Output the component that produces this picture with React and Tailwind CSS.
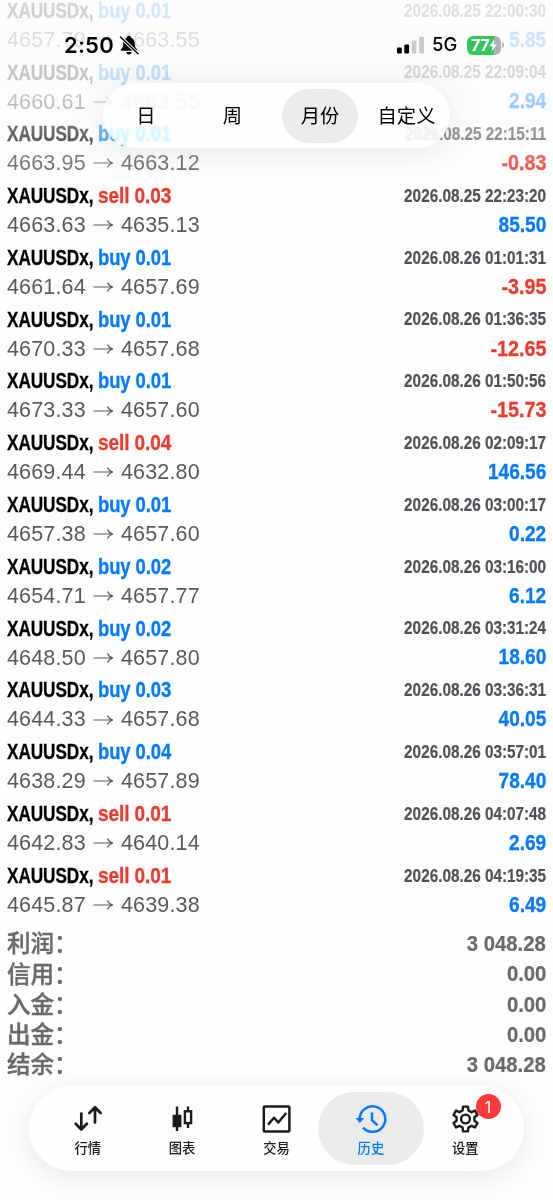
import React from "react";

const DEALS = [
  ["buy 0.01", "4657.79", "4663.55", "2026.08.25 22:00:30", "5.85"],
  ["buy 0.01", "4660.61", "4663.55", "2026.08.25 22:09:04", "2.94"],
  ["buy 0.01", "4663.95", "4663.12", "2026.08.25 22:15:11", "-0.83"],
  ["sell 0.03", "4663.63", "4635.13", "2026.08.25 22:23:20", "85.50"],
  ["buy 0.01", "4661.64", "4657.69", "2026.08.26 01:01:31", "-3.95"],
  ["buy 0.01", "4670.33", "4657.68", "2026.08.26 01:36:35", "-12.65"],
  ["buy 0.01", "4673.33", "4657.60", "2026.08.26 01:50:56", "-15.73"],
  ["sell 0.04", "4669.44", "4632.80", "2026.08.26 02:09:17", "146.56"],
  ["buy 0.01", "4657.38", "4657.60", "2026.08.26 03:00:17", "0.22"],
  ["buy 0.02", "4654.71", "4657.77", "2026.08.26 03:16:00", "6.12"],
  ["buy 0.02", "4648.50", "4657.80", "2026.08.26 03:31:24", "18.60"],
  ["buy 0.03", "4644.33", "4657.68", "2026.08.26 03:36:31", "40.05"],
  ["buy 0.04", "4638.29", "4657.89", "2026.08.26 03:57:01", "78.40"],
  ["sell 0.01", "4642.83", "4640.14", "2026.08.26 04:07:48", "2.69"],
  ["sell 0.01", "4645.87", "4639.38", "2026.08.26 04:19:35", "6.49"],
];

const SUMMARY = [
  ["利润：", "3 048.28"],
  ["信用：", "0.00"],
  ["入金：", "0.00"],
  ["出金：", "0.00"],
  ["结余：", "3 048.28"],
];

function Deal({ deal }) {
  const [side, open, close, time, profit] = deal;
  const isBuy = side.startsWith("buy");
  return (
    <div className="flex h-[61.79px] flex-col">
      <div className="flex h-[29px] items-center justify-between">
        <span className="flex text-[21.5px] font-bold text-black [-webkit-text-stroke:0.3px_currentColor]">
          <span className="w-[91px] origin-left scale-x-[0.8] tracking-[-0.1px]">XAUUSDx,</span>
          <span
            className={
              "origin-left tracking-[-0.1px] " +
              (isBuy ? "scale-x-[0.858] text-[#007aff]" : "scale-x-[0.885] text-[#eb3b2e]")
            }
          >
            {side}
          </span>
        </span>
        <span className="origin-right scale-x-[0.86] text-[17.8px] font-bold text-[#505056] [-webkit-text-stroke:0.2px_currentColor]">{time}</span>
      </div>
      <div className="flex h-[29px] items-center justify-between">
        <span className="flex items-center text-[21.5px] text-[#58595e]">
          <span className="w-[79px] tracking-[0.15px]">{open}</span>
          <svg className="mx-[7px] h-[12px] w-[21px]" viewBox="0 0 21 12" fill="none" stroke="currentColor" strokeWidth="1.1">
            <path d="M0.5 6H20M14.5 1.5C15.5 4 17.3 5.4 20 6C17.3 6.6 15.5 8 14.5 10.5" />
          </svg>
          <span className="tracking-[0.15px]">{close}</span>
        </span>
        <span
          className={
            "origin-right text-[21.7px] font-bold [-webkit-text-stroke:0.3px_currentColor] " +
            (profit.startsWith("-") ? "scale-x-[0.91] text-[#eb3b2e]" : "scale-x-[0.88] text-[#007aff]")
          }
        >
          {profit}
        </span>
      </div>
    </div>
  );
}

function StatusBar() {
  return (
    <div className="absolute inset-x-0 top-[30px] flex h-[30px] items-center justify-between pr-[49px] pl-[64px] font-['Inter',sans-serif] text-black">
      <div className="flex items-center gap-[4px]">
        <span className="w-[51px] text-[22px] font-semibold tracking-[0.2px]">2:50</span>
        <svg className="h-[20px] w-[20px]" viewBox="0 0 20 20">
          <path d="M10 0.8C11.3 0.8 12.1 1.6 12.2 2.7C14.6 3.6 15.8 5.8 15.8 8.5C15.8 11.8 16.5 13 18 14.3C18.5 14.8 18.3 15.8 17.4 15.8H2.6C1.7 15.8 1.5 14.8 2 14.3C3.5 13 4.2 11.8 4.2 8.5C4.2 5.8 5.4 3.6 7.8 2.7C7.9 1.6 8.7 0.8 10 0.8Z" />
          <path d="M7.2 17H12.8C12.5 18.7 11.5 19.5 10 19.5C8.5 19.5 7.5 18.7 7.2 17Z" />
          <path d="M1.5 2L19 18.8" stroke="#fcfcfc" strokeWidth="3.4" />
          <path d="M1.5 2L19 18.8" stroke="#000" strokeWidth="1.4" strokeLinecap="round" />
        </svg>
      </div>
      <div className="flex items-center">
        <svg className="h-[18px] w-[28px]" viewBox="0 0 28 18">
          <rect x="0" y="11.5" width="4.8" height="6" rx="1.3" />
          <rect x="7.3" y="8.5" width="4.8" height="9" rx="1.3" />
          <rect x="14.7" y="4.5" width="4.8" height="13" rx="1.3" fill="#c9c9c9" />
          <rect x="22.1" y="0.8" width="4.8" height="16.7" rx="1.3" fill="#c9c9c9" />
        </svg>
        <span className="ml-[7px] w-[35px] text-[18.5px] font-medium">5G</span>
        <div className="flex h-[19px] w-[34px] items-center justify-center rounded-[6px] bg-linear-to-r from-[#34c759] from-78% to-[#b2b2b2] to-78% text-white">
          <span className="text-[16px] leading-none font-bold tracking-[-0.4px]">77</span>
          <svg className="h-[13px] w-[8px]" viewBox="0 0 8 13" fill="currentColor">
            <path d="M5.4 0.3L0.3 7.2H3.5L2.6 12.7L7.8 5.5H4.5Z" />
          </svg>
        </div>
        <svg className="ml-px h-[6px] w-[2px]" viewBox="0 0 2 6" fill="#b2b2b2">
          <path d="M0 0C2.7 1 2.7 5 0 6Z" />
        </svg>
      </div>
    </div>
  );
}

function PeriodPicker() {
  return (
    <div className="absolute top-[83px] left-[103px] flex h-[65px] w-[347px] items-center rounded-full bg-[#fefefe]/82 font-['Noto_Sans_CJK_SC',sans-serif] text-[19.3px] text-black backdrop-blur-[1.2px] backdrop-hue-rotate-[-22deg] backdrop-saturate-200">
      <span className="w-[86px] text-center">日</span>
      <span className="w-[87px] text-center">周</span>
      <span className="mx-[6px] flex h-[54px] w-[76px] items-center justify-center rounded-full bg-[#ebebeb]">月份</span>
      <span className="w-[85px] text-center">自定义</span>
    </div>
  );
}

const ICONS = {
  quotes: (
    <g strokeWidth="2.7" strokeLinecap="round" strokeLinejoin="round">
      <path d="M9.3 8.5V24.3M3.7 18.8L9.3 24.5L14.9 18.8M23 17.5V2.5M17.4 8L23 2.2L28.6 8" />
    </g>
  ),
  chart: (
    <g strokeWidth="2.4">
      <path d="M11 1.5V26M22 1.5V5.5M22 18.5V23" />
      <rect x="7.8" y="11" width="6.4" height="10" fill="currentColor" />
      <rect x="18.9" y="6.3" width="6.2" height="11.8" />
    </g>
  ),
  trade: (
    <g strokeWidth="2.5" strokeLinejoin="round">
      <rect x="3.8" y="1.4" width="25.6" height="25.2" rx="1" />
      <path d="M8 19.6L14 12.7L18.3 17.5L26.2 8" />
    </g>
  ),
  history: (
    <g strokeWidth="2.5">
      <path d="M4.7 15A12.8 12.8 0 1 1 8 22.7" />
      <path d="M0.5 13H9.3L4.9 18Z" fill="currentColor" stroke="none" />
      <path d="M17 7.5V15.2L22.5 20.3" />
    </g>
  ),
  settings: (
    <g strokeWidth="2.4" strokeLinejoin="round">
      <path d="M14 1.6L19 1.6L19.4 5.4L22.5 7.2L26 5.6L28.5 10L25.4 12.2V15.8L28.5 18L26 22.4L22.5 20.8L19.4 22.6L19 26.4H14L13.6 22.6L10.5 20.8L7 22.4L4.5 18L7.6 15.8V12.2L4.5 10L7 5.6L10.5 7.2L13.6 5.4Z" />
      <circle cx="16.5" cy="14" r="4.4" />
    </g>
  ),
};

const TABS = [
  ["quotes", "行情"],
  ["chart", "图表"],
  ["trade", "交易"],
  ["history", "历史"],
  ["settings", "设置"],
];

function TabBar() {
  return (
    <div className="absolute top-[1086px] left-[29px] grid h-[85px] w-[495px] grid-cols-5 items-center rounded-full bg-[#fefefd] px-[11.5px] font-['Noto_Sans_CJK_SC',sans-serif] text-[#1b1b1b] shadow-[0_6px_32px_rgba(0,0,0,0.10)]">
      {TABS.map(([id, label]) => (
        <div
          key={id}
          className={"relative -mx-[6px] flex h-[73px] flex-col items-center rounded-full pt-[13px] " + (id === "history" ? "bg-[#ebebeb] text-[#007aff]" : "")}
        >
          <svg className="h-[28px] w-[32px]" viewBox="0 0 32 28" fill="none" stroke="currentColor">
            {ICONS[id]}
          </svg>
          <span className="mt-[5px] text-[13.3px] leading-[20px] font-medium">{label}</span>
          {id === "settings" && (
            <span className="absolute top-[2px] left-[63.5px] flex size-[25px] items-center justify-center rounded-full bg-[#ff383c] text-[16px] leading-none text-white font-['Inter',sans-serif]">1</span>
          )}
        </div>
      ))}
    </div>
  );
}

export default function App() {
  return (
    <div className="relative h-[1200px] w-[553px] overflow-hidden bg-[#fefefe] font-['Liberation_Sans',Arial,sans-serif] whitespace-nowrap">
      <div className="-mt-[3.6px] px-[7px]">
        {DEALS.map((deal) => (
          <Deal key={deal[3]} deal={deal} />
        ))}
        <div className="mt-[4px] text-[#69696a]">
          {SUMMARY.map(([label, value]) => (
            <div key={label} className="flex h-[30.3px] items-center justify-between">
              <span className="text-[23.5px] leading-[30px] font-medium font-['Noto_Sans_CJK_SC',sans-serif] [-webkit-text-stroke:0.4px_currentColor]">{label}</span>
              <span className="relative top-px origin-right scale-x-[0.89] text-[22.8px] font-bold [-webkit-text-stroke:0.2px_currentColor]">{value}</span>
            </div>
          ))}
        </div>
      </div>
      <div className="absolute inset-x-0 top-0 h-[190px] bg-linear-to-b from-[#fcfcfc]/84 from-0% via-[#fcfcfc]/78 via-42% to-[#fcfcfc]/0" />
      <PeriodPicker />
      <div className="pointer-events-none absolute top-[83px] left-[103px] h-[65px] w-[347px] rounded-full shadow-[0_4px_38px_rgba(0,0,0,0.10)]" />
      <StatusBar />
      <TabBar />
    </div>
  );
}
